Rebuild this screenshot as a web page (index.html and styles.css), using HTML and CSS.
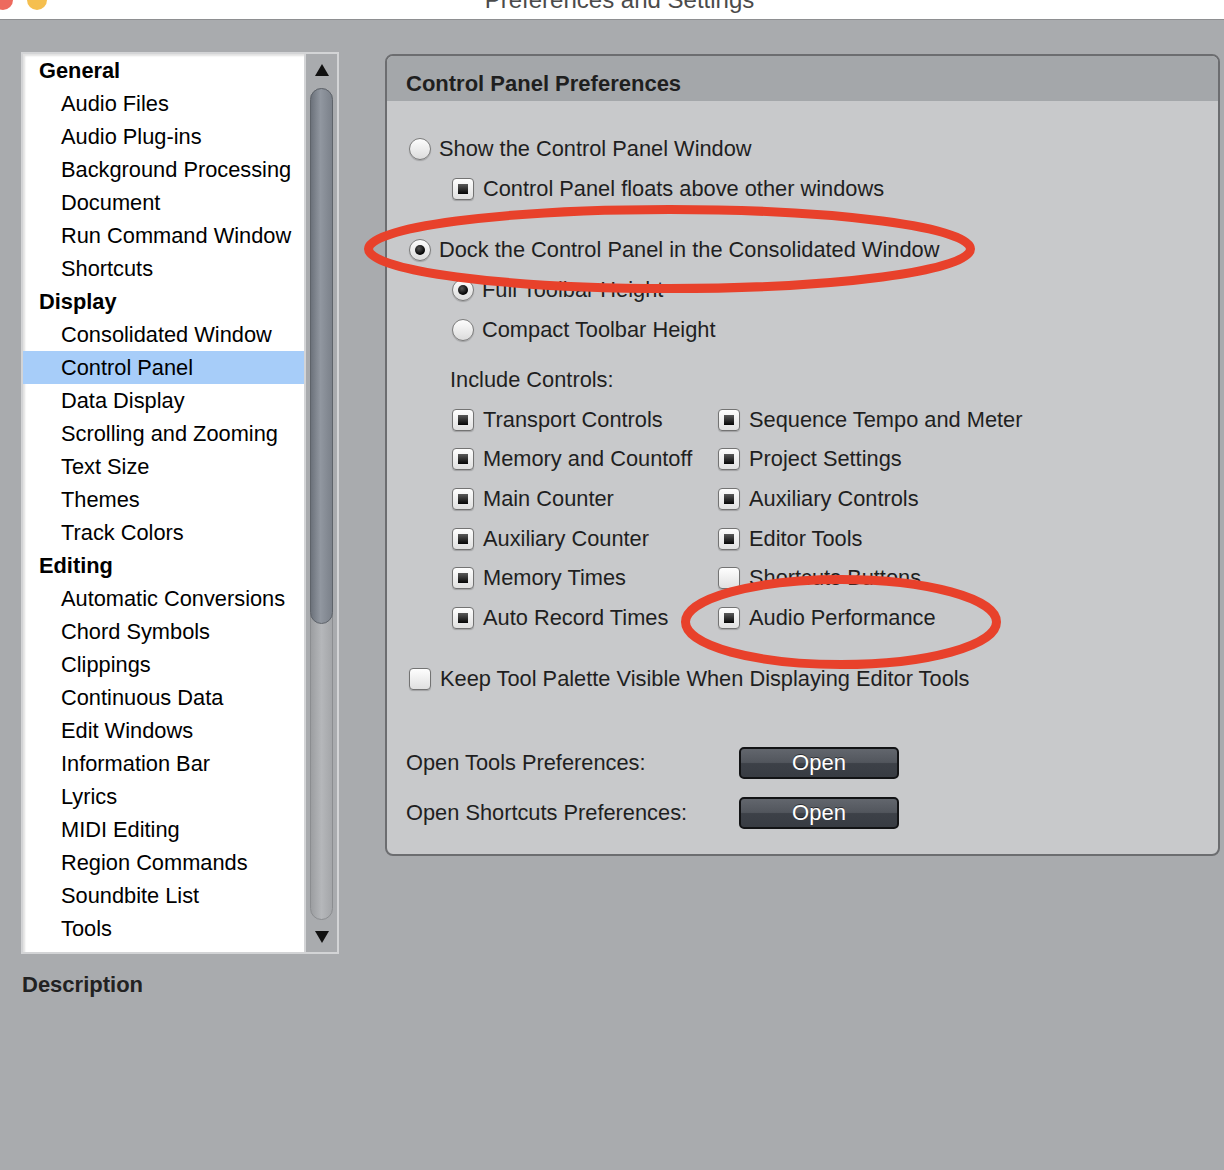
FILE: index.html
```html
<!DOCTYPE html>
<html>
<head>
    <meta charset="utf-8">
    <title>Preferences and Settings</title>
    <link rel="stylesheet" href="styles.css">
</head>
<body>
    <div class="titlebar">
        <div class="lights">
            <span class="light red"></span>
            <span class="light yellow"></span>
        </div>
        <div class="title">Preferences and Settings</div>
    </div>

    <div class="main">
        <aside class="sidebar">
            <div class="listbox">
                <ul class="list">
                    <li class="group">General</li>
                    <li>Audio Files</li>
                    <li>Audio Plug-ins</li>
                    <li>Background Processing</li>
                    <li>Document</li>
                    <li>Run Command Window</li>
                    <li>Shortcuts</li>
                    <li class="group">Display</li>
                    <li>Consolidated Window</li>
                    <li class="selected">Control Panel</li>
                    <li>Data Display</li>
                    <li>Scrolling and Zooming</li>
                    <li>Text Size</li>
                    <li>Themes</li>
                    <li>Track Colors</li>
                    <li class="group">Editing</li>
                    <li>Automatic Conversions</li>
                    <li>Chord Symbols</li>
                    <li>Clippings</li>
                    <li>Continuous Data</li>
                    <li>Edit Windows</li>
                    <li>Information Bar</li>
                    <li>Lyrics</li>
                    <li>MIDI Editing</li>
                    <li>Region Commands</li>
                    <li>Soundbite List</li>
                    <li>Tools</li>
                </ul>
                <div class="scrollbar">
                    <div class="arrow">
                        <svg width="14" height="12" viewBox="0 0 14 12"><path d="M7 0 L14 12 L0 12 Z" fill="#111"/></svg>
                    </div>
                    <div class="track"><div class="thumb"></div></div>
                    <div class="arrow">
                        <svg width="14" height="12" viewBox="0 0 14 12"><path d="M0 0 L14 0 L7 12 Z" fill="#111"/></svg>
                    </div>
                </div>
            </div>
            <h2 class="desc-title">Description</h2>
        </aside>

        <section class="panel">
            <div class="panel-head">Control Panel Preferences</div>
            <div class="panel-body">
                <div class="opt lvl1"><span class="radio"></span>Show the Control Panel Window</div>
                <div class="opt lvl2"><span class="check on"></span>Control Panel floats above other windows</div>
                <div class="opt lvl1 dock"><span class="radio on"></span>Dock the Control Panel in the Consolidated Window</div>
                <div class="opt lvl2"><span class="radio on"></span>Full Toolbar Height</div>
                <div class="opt lvl2"><span class="radio"></span>Compact Toolbar Height</div>

                <div class="opt include">Include Controls:</div>
                <div class="controls">
                    <div class="opt"><span class="check on"></span>Transport Controls</div>
                    <div class="opt"><span class="check on"></span>Sequence Tempo and Meter</div>
                    <div class="opt"><span class="check on"></span>Memory and Countoff</div>
                    <div class="opt"><span class="check on"></span>Project Settings</div>
                    <div class="opt"><span class="check on"></span>Main Counter</div>
                    <div class="opt"><span class="check on"></span>Auxiliary Controls</div>
                    <div class="opt"><span class="check on"></span>Auxiliary Counter</div>
                    <div class="opt"><span class="check on"></span>Editor Tools</div>
                    <div class="opt"><span class="check on"></span>Memory Times</div>
                    <div class="opt"><span class="check"></span>Shortcuts Buttons</div>
                    <div class="opt"><span class="check on"></span>Auto Record Times</div>
                    <div class="opt"><span class="check on"></span>Audio Performance</div>
                </div>

                <div class="opt lvl1 keep"><span class="check"></span>Keep Tool Palette Visible When Displaying Editor Tools</div>

                <div class="open-row first">
                    <span class="label">Open Tools Preferences:</span>
                    <button type="button" class="btn">Open</button>
                </div>
                <div class="open-row">
                    <span class="label">Open Shortcuts Preferences:</span>
                    <button type="button" class="btn">Open</button>
                </div>
            </div>
        </section>
    </div>

    <!-- hand-drawn highlight marks -->
    <svg class="marks" width="1224" height="1170" viewBox="0 0 1224 1170">
        <ellipse cx="669.5" cy="249" rx="301" ry="39.5" fill="none" stroke="#e8412b" stroke-width="9"/>
        <ellipse cx="841" cy="622" rx="155.5" ry="42.5" fill="none" stroke="#e8412b" stroke-width="9"/>
    </svg>
</body>
</html>
```

FILE: styles.css
```css
body {
    margin: 0;
    width: 1224px;
    height: 1170px;
    overflow: hidden;
    position: relative;
    background: #a9abae;
    font-family: "Liberation Sans", Arial, sans-serif;
    color: #1f1f1f;
}
.titlebar {
    display: grid;
    grid-template-columns: 1fr auto 1fr;
    height: 19px;
    background: #fff;
    border-bottom: 1px solid #8e8f91;
    overflow: hidden;
}
.lights {
    display: flex;
    gap: 14px;
    margin-left: -7px;
    margin-top: -10px;
}
.light {
    width: 20px;
    height: 20px;
    border-radius: 50%;
}
.light.red {
    background: #ed6a5e;
}
.light.yellow {
    background: #f5bf4f;
}
.title {
    margin-top: -12px;
    margin-left: 15px;
    font-size: 24px;
    line-height: 24px;
    color: #4b4b4b;
}
.main {
    display: flex;
    align-items: flex-start;
}
.sidebar {
    margin-left: 21px;
    margin-top: 32px;
}
.listbox {
    display: flex;
    width: 318px;
    height: 902px;
    box-sizing: border-box;
    border: 2px solid #d3d4d6;
}
.list {
    list-style: none;
    margin: 0;
    padding: 0;
    width: 281px;
    background: #fff;
    border-right: 2px solid #d3d4d6;
    box-shadow: inset 2px 2px 2px rgba(0,0,0,0.12);
    overflow: hidden;
}
.list li {
    height: 33px;
    line-height: 33px;
    font-size: 21.8px;
    padding-left: 38px;
    color: #000;
    white-space: nowrap;
}
.list li.group {
    font-weight: bold;
    padding-left: 16px;
}
.list li.selected {
    background: #a7cdf9;
}
.scrollbar {
    width: 31px;
    display: flex;
    flex-direction: column;
    align-items: center;
}
.arrow {
    height: 32px;
    display: flex;
    align-items: center;
    justify-content: center;
}
.arrow:last-child {
    height: 30px;
}
.track {
    flex: 1;
    width: 23px;
    margin: 2px 0;
    box-sizing: border-box;
    border: 1px solid #8b8d90;
    border-radius: 12px;
    background: linear-gradient(to right, #9c9ea1, #b5b7ba 50%, #a4a6a9);
}
.thumb {
    height: 534px;
    margin: -1px;
    border: 1px solid #5e636a;
    border-radius: 12px;
    background: linear-gradient(to right, #6c727b, #9197a0 45%, #7b818a);
}
.desc-title {
    margin: 18px 0 0 1px;
    font-size: 22px;
    line-height: 26px;
    font-weight: bold;
    color: #222;
}
.panel {
    margin-left: 46px;
    margin-top: 34px;
    width: 835px;
    height: 802px;
    box-sizing: border-box;
    border: 2px solid #6c6d70;
    border-radius: 8px;
    background: #c8c9cb;
    overflow: hidden;
}
.panel-head {
    height: 45px;
    box-sizing: border-box;
    padding: 15px 19px 0;
    font-size: 22px;
    line-height: 26px;
    font-weight: bold;
    background: #a4a7aa;
}
.panel-body {
    padding: 28px 0 0 19px;
}
.opt {
    display: flex;
    align-items: center;
    height: 40px;
    font-size: 21.8px;
    white-space: nowrap;
}
.lvl1 {
    margin-left: 3px;
}
.lvl2 {
    margin-left: 46px;
}
.dock {
    margin-top: 21px;
}
.include {
    margin-left: 44px;
    margin-top: 10px;
}
.radio {
    width: 22px;
    height: 22px;
    box-sizing: border-box;
    margin-right: 8px;
    border: 1px solid #7b7b7b;
    border-radius: 50%;
    background: linear-gradient(#fdfdfd, #dcdcdc);
    box-shadow: 0 1px 1px rgba(0,0,0,0.2);
    display: flex;
    align-items: center;
    justify-content: center;
    flex-shrink: 0;
}
.radio.on::after {
    content: "";
    width: 10px;
    height: 10px;
    border-radius: 50%;
    background: radial-gradient(circle at 40% 35%, #555, #000 70%);
}
.check {
    width: 22px;
    height: 22px;
    box-sizing: border-box;
    margin-right: 9px;
    border: 1.5px solid #737373;
    border-radius: 4px;
    background: linear-gradient(#fefefe, #e0e0e0);
    box-shadow: 0 1px 1px rgba(0,0,0,0.2);
    display: flex;
    align-items: center;
    justify-content: center;
    flex-shrink: 0;
}
.check.on::after {
    content: "";
    width: 10px;
    height: 10px;
    background: linear-gradient(#5a5a5a, #050505);
}
.controls {
    display: grid;
    grid-template-columns: 266px auto;
    grid-auto-rows: 39.6px;
    margin-left: 46px;
}
.controls .opt {
    height: auto;
}
.keep {
    margin-top: 21px;
}
.open-row {
    display: flex;
    align-items: center;
    height: 40px;
    margin-top: 10px;
    font-size: 21.8px;
}
.open-row.first {
    margin-top: 44px;
}
.open-row .label {
    width: 333px;
}
.btn {
    width: 160px;
    height: 32px;
    box-sizing: border-box;
    padding: 0;
    border: 2px solid #121315;
    border-radius: 5px;
    background: linear-gradient(#62666d, #52565d 48%, #3d4148 52%, #383c43);
    color: #fff;
    font-family: "Liberation Sans", Arial, sans-serif;
    font-size: 22px;
    text-shadow: 0 -1px 0 rgba(0,0,0,0.5);
}
.marks {
    position: absolute;
    top: 0;
    left: 0;
    pointer-events: none;
}
```
